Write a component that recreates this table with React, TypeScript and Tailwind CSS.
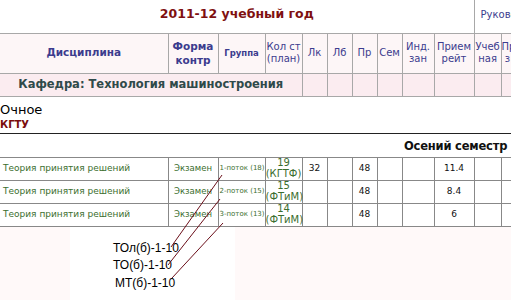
import React from "react";

const cols = [168, 50, 47, 37, 25, 25, 25, 25, 32, 40, 27, 40];

const rows = [
  { g: "1-поток (18)", n: "19", f: "(КГТФ)", lk: "32", r: "11.4" },
  { g: "2-поток (15)", n: "15", f: "(ФТиМ)", lk: "", r: "8.4" },
  { g: "3-поток (13)", n: "14", f: "(ФТиМ)", lk: "", r: "6" },
];

function Cols() {
  return (
    <colgroup>
      {cols.map((w, i) => (
        <col key={i} style={{ width: w }} />
      ))}
    </colgroup>
  );
}

export default function App() {
  const thBase = "border border-[#a8a8a8] text-[#3c3c8e] p-0 text-center align-middle";
  const th = thBase + " font-normal text-[10px] leading-[12px]";
  const tdBase = "border border-[#888888] p-0 align-middle";
  const tdNum = tdBase + " text-center text-[9px] text-[#111111]";
  const tdGreen = tdBase + " text-[#3b6e2e]";
  return (
    <div
      className="relative w-[511px] h-[300px] overflow-hidden bg-white"
      style={{ fontFamily: "'DejaVu Sans', Verdana, sans-serif" }}
    >
      <div className="w-[560px]">
        <table className="border-collapse table-fixed w-[541px]">
          <Cols />
          <tbody>
            <tr className="h-[33px]">
              <td colSpan={10} className="p-0 pb-[4px] text-center align-middle text-[12.5px] font-bold text-[#7f1010] border-b border-[#a8a8a8]">
                2011-12 учебный год
              </td>
              <td colSpan={2} className="p-0 pl-[6px] pb-[4px] align-middle text-left text-[10px] text-[#3c3c8e] border-l border-b border-[#a8a8a8] whitespace-nowrap">
                Руководство
              </td>
            </tr>
            <tr className="h-[40px] bg-[#fdf6f7]">
              <th className={thBase + " border-l-0 font-bold text-[10.5px]"}>Дисциплина</th>
              <th className={thBase + " font-bold text-[10.5px] leading-[14px]"}>Форма<br />контр</th>
              <th className={thBase + " font-bold text-[8.5px]"}>Группа</th>
              <th className={th}>Кол ст<br />(план)</th>
              <th className={th}>Лк</th>
              <th className={th}>Лб</th>
              <th className={th}>Пр</th>
              <th className={th}>Сем</th>
              <th className={th}>Инд.<br />зан</th>
              <th className={th}>Прием<br />рейт</th>
              <th className={th}>Учеб<br />ная</th>
              <th className={thBase + " font-normal text-[10px] leading-[12px] text-left"}>Пр<br />&nbsp;з</th>
            </tr>
            <tr className="h-[23px] bg-[#fbecf0]">
              <td colSpan={4} className="border border-[#a8a8a8] border-l-0 p-0 text-center align-middle text-[11.5px] font-bold text-[#2f4a4a] whitespace-nowrap">
                Кафедра: Технология машиностроения
              </td>
              {cols.slice(4).map((_, i) => (
                <td key={i} className="border border-[#a8a8a8] p-0"></td>
              ))}
            </tr>
          </tbody>
        </table>

        <div className="pt-[4px] text-[13px] leading-[17px] text-black">Очное</div>
        <div className="text-[10px] leading-[13px] font-bold text-[#7a0c0c]">КГТУ</div>
        <div className="mt-[2px] h-[1px] bg-[#222222] w-[541px]"></div>
        <div className="h-[23px] pl-[404px] whitespace-nowrap text-[11.5px] tracking-[-0.2px] leading-[25px] font-bold text-[#111111]">
          Осений семестр
        </div>

        <table className="border-collapse table-fixed w-[541px]">
          <Cols />
          <tbody>
            {rows.map((r, i) => (
              <tr key={i} className="h-[23px]">
                <td className={tdGreen + " border-l-0 text-left pl-[3px] text-[9px] whitespace-nowrap"}>
                  Теория принятия решений
                </td>
                <td className={tdGreen + " text-center text-[8.5px]"}>Экзамен</td>
                <td className={tdGreen + " text-left pl-[1px] text-[7px] whitespace-nowrap"}>{r.g}</td>
                <td className={tdGreen + " text-center text-[10px] leading-[10.5px]"}>
                  {r.n}
                  <br />
                  {r.f}
                </td>
                <td className={tdNum}>{r.lk}</td>
                <td className={tdNum}></td>
                <td className={tdNum}>48</td>
                <td className={tdNum}></td>
                <td className={tdNum}></td>
                <td className={tdNum}>{r.r}</td>
                <td className={tdNum}></td>
                <td className={tdNum}></td>
              </tr>
            ))}
          </tbody>
        </table>

        <div className="flex h-[80px] bg-[#fff9f9]">
          <div className="ml-[70px] w-[165px] bg-white pt-[13px] pl-[43px] text-[12px] leading-[17.5px] text-black" style={{ fontFamily: "'Liberation Sans', Arial, sans-serif" }}>
            <div>ТОл(б)-1-10</div>
            <div>ТО(б)-1-10</div>
            <div className="pl-[2px]">МТ(б)-1-10</div>
          </div>
        </div>
      </div>

      <svg className="absolute left-0 top-0 pointer-events-none" width="511" height="300">
        <g stroke="#6b0f1a" strokeWidth="1" fill="none">
          <line x1="171" y1="247" x2="222" y2="175" />
          <line x1="168" y1="265" x2="220" y2="199" />
          <line x1="172" y1="278" x2="223" y2="223" />
        </g>
      </svg>
    </div>
  );
}
